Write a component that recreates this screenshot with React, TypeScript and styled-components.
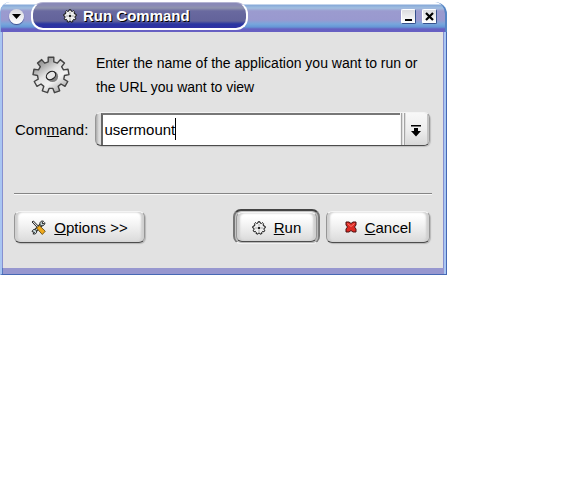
import React, { useState } from "react";
import styled, { createGlobalStyle, css } from "styled-components";

const GlobalStyle = createGlobalStyle`
  body {
    margin: 0;
    background: #fff;
    font-family: "Liberation Sans", Arial, sans-serif;
    font-size: 15px;
    color: #000;
  }
  *, *::before, *::after { box-sizing: border-box; }
  button, input { font: inherit; color: inherit; }
`;

const Dialog = styled.main`
  display: flex;
  flex-direction: column;
  width: 100%;
  max-width: 447px;
  padding-top: 2px;
`;

const TitleBar = styled.header`
  display: flex;
  align-items: flex-start;
  height: 30px;
  padding: 0 8px;
  background:
    linear-gradient(#fff 0 2px, #85a8d8 3px, #a2bfe0 6px, #9b9bcf 9px, #9999cf 18px, #78a6dc 22px, #6596d6 25px, #655fc0 27px, #6860c4);
  border-radius: 10px 12px 0 0;
  border-left: 1px solid #86aade;
  border-right: 2px solid #5484c4;
`;

const MenuButton = styled.button`
  display: grid;
  place-items: center;
  width: 15px;
  height: 15px;
  margin: 7px 7px 0 0;
  padding: 0;
  border: 0;
  border-radius: 50%;
  background: linear-gradient(#d8d8df, #fff);
  box-shadow: 0 1px 1px #3d4d8c;
`;

const TitleTab = styled.h1`
  display: flex;
  align-items: center;
  gap: 6px;
  width: 217px;
  height: 28px;
  margin: 0 auto 0 0;
  padding: 0 0 0 30px;
  border: 2px solid #fff;
  border-top: 1px solid #b3b3d2;
  border-radius: 12px;
  background: linear-gradient(#8989b6 0 2px, #8f93ad 5px, #69699f 8px, #63639a 18px, #2a35a0 21px, #3030a4);
  color: #fff;
  font-size: 15px;
  line-height: 20px;
  white-space: nowrap;
  text-shadow: 1px 1px 0 #000;
`;

const WindowControls = styled.div`
  display: flex;
  gap: 6px;
  margin-top: 7px;
`;

const ControlButton = styled.button`
  display: grid;
  place-items: center;
  width: 15px;
  height: 15px;
  padding: 0;
  border: 1px solid #fff;
  border-right-color: #36518d;
  border-bottom-color: #36518d;
  border-radius: 2px;
  background: linear-gradient(#dcdce0, #fff);
`;

const Frame = styled.div`
  border-left: 2px solid #a9c6f2;
  border-right: 1px solid #4668b4;
  border-bottom: 1px solid #4668b4;
  background: #a9c6f2;
  padding-right: 2px;
`;

const Body = styled.form`
  display: flex;
  flex-direction: column;
  padding: 19px 11px 24px;
  background: #e2e2e2;
  border: solid;
  border-width: 0 1px;
  border-color: #5478bf #8790d0;
`;

const BottomEdge = styled.div`
  height: 6px;
  background: #9797cf;
  border-left: 1px solid #5478bf;
`;

const Intro = styled.div`
  display: flex;
  gap: 26px;
  padding-left: 18px;
`;

const IntroIcon = styled.div`
  flex: none;
  width: 38px;
  height: 38px;
  margin-top: 5px;
`;

const IntroText = styled.p`
  margin: 0;
  max-width: 340px;
  font-size: 14px;
  line-height: 24px;
`;

const CommandRow = styled.div`
  display: flex;
  align-items: center;
  gap: 7px;
  margin: 13px 2px 47px 1px;

  label { padding-top: 1px; }
`;

const raised = css`
  border: 1px solid #969696;
  border-top-color: #f4f4f4;
  border-bottom-color: #4c4c4c;
  border-radius: 6px;
  background: linear-gradient(#fff, #fff 12%, #f0f0f0 50%, #dadada);
`;

const ComboBox = styled.div`
  ${raised}
  display: flex;
  flex: 1;
  min-width: 0;
  height: 34px;
  padding-left: 5px;
  background: linear-gradient(90deg, #aaa, #ddd 3px, #ccc);
  box-shadow: 1px 1px 1px #c0c0c0;
  overflow: hidden;
`;

const Field = styled.div`
  display: flex;
  align-items: center;
  flex: 1;
  min-width: 0;
  padding: 0 0 2px 1px;
  border-top: 2px solid #777;
  border-left: 2px solid #666;
  background: #fff;
`;

const CommandInput = styled.input`
  field-sizing: content;
  min-width: 1px;
  max-width: 100%;
  padding: 0;
  border: 0;
  outline: 0;
  background: transparent;
  caret-color: transparent;
`;

const Caret = styled.span`
  flex: none;
  width: 1px;
  height: 22px;
  background: #000;
`;

const DropButton = styled.button`
  display: grid;
  place-items: center;
  width: 29px;
  padding: 3px 0 0 5px;
  border: 0;
  border-right: 2px solid #c4c4c4;
  background:
    repeating-linear-gradient(90deg, #f4f4f4 0 1px, #a5a5a5 1px 2px, #ddd 2px 3px) 0 0 / 6px 100% no-repeat,
    linear-gradient(#f8f8f8, #eee 50%, #d8d8d8);
`;

const Separator = styled.hr`
  width: 100%;
  height: 2px;
  margin: 0;
  border: 0;
  border-top: 1px solid #858585;
  border-bottom: 1px solid #f8f8f8;
`;

const Actions = styled.div`
  display: flex;
  align-items: center;
  gap: 6px;
  margin: 14px 2px 0 0;
`;

const PushButton = styled.button<{ $wide?: boolean }>`
  ${raised}
  display: flex;
  align-items: center;
  justify-content: center;
  gap: 8px;
  width: ${(p) => (p.$wide ? 131 : 104)}px;
  height: 32px;
  padding: 1px 0 0;
  box-shadow: inset 3px 0 2px #d0d0d0, inset -3px 0 2px #d0d0d0, inset 0 2px 0 #fff, 1px 1px 1px #b8b8b8;
`;

const DefaultRing = styled.div`
  margin-left: auto;
  padding: 1px;
  border: solid;
  border-width: 2px 2px 1px;
  border-color: #444 #777 #f8f8f8;
  border-radius: 8px;
  background: #c4c4c4;

  ${PushButton} {
    width: 81px;
    height: 30px;
  }
`;

function gearPath(c: number, outer: number, inner: number, teeth: number) {
  const points: string[] = [];
  const step = (Math.PI * 2) / teeth;
  const at = (r: number, a: number) => `${(c + r * Math.sin(a)).toFixed(1)} ${(c - r * Math.cos(a)).toFixed(1)}`;
  for (let i = 0; i < teeth; i++) {
    const a = i * step;
    points.push(
      at(inner, a - step * 0.3),
      at(outer, a - step * 0.22),
      at(outer, a + step * 0.22),
      at(inner, a + step * 0.3)
    );
  }
  return `M${points.join("L")}Z`;
}

const LargeGear = () => (
  <svg width="38" height="38" viewBox="0 0 38 38" aria-hidden="true">
    <defs>
      <linearGradient id="metal" x1="0.8" y1="0.95" x2="0.2" y2="0.1">
        <stop offset="0" stopColor="#a8a8a8" />
        <stop offset="0.35" stopColor="#f2f2f2" />
        <stop offset="0.6" stopColor="#e2e2e2" />
        <stop offset="1" stopColor="#8c8c8c" />
      </linearGradient>
    </defs>
    <path d={gearPath(19, 18, 13.5, 9)} fill="url(#metal)" stroke="#444" strokeWidth="1.4" strokeLinejoin="round" />
    <circle cx="20.5" cy="20.5" r="5.6" fill="#808080" />
    <ellipse cx="19" cy="19.5" rx="5" ry="3.8" transform="rotate(-35 19 19.5)" fill="#e6e6e6" stroke="#222" strokeWidth="1.2" />
  </svg>
);

const SmallGear = () => (
  <svg width="14" height="14" viewBox="0 0 14 14" aria-hidden="true">
    <path d={gearPath(7, 6.3, 5.1, 9)} fill="#f0f0f0" stroke="#111" strokeWidth="1" />
    <path d="M7 3v2M7 9v2M3 7h2M9 7h2" stroke="#aaa" />
    <circle cx="7" cy="7" r="1.3" fill="#222" />
  </svg>
);

const ToolsIcon = () => (
  <svg width="15" height="15" viewBox="0 0 15 15" aria-hidden="true">
    <path d="M3 12l8-8" stroke="#222" strokeWidth="3.5" />
    <path d="M3 12l8-8" stroke="#b5ccd0" strokeWidth="1.7" />
    <path d="M12.5 1.2C9.5.4 8.2 3 9.3 5.2c2 1.4 4.7.2 4.6-2.5l-2 1.3-1-1zM1 11.5c1-3 4-2.3 4.6-.4.4 2-1.4 3.6-3.7 2.7l1.6-1.2z" fill="#c8dadd" stroke="#222" />
    <path d="M1 2l1.4-1 5.2 5.3-1.3 1.2z" fill="#ddd" stroke="#222" />
    <path d="M5.5 8l2.800-2.500 6 5.700-3 3.300z" fill="#efa91c" stroke="#57400d" strokeWidth="0.8" />
  </svg>
);

const CancelIcon = () => (
  <svg width="12" height="12" viewBox="0 0 12 12" aria-hidden="true">
    <path d="M1 1h3l2 1.5L8 1h3v3L9.5 6l1.5 2v3H8L6 9.5 4 11H1V8l1.5-2L1 4z" fill="#dd2923" stroke="#4c1111" strokeLinejoin="round" />
    <path d="M2.5 2.5l3.5 3 3.5-3" fill="none" stroke="#ff7a70" />
  </svg>
);

export default function App() {
  const [command, setCommand] = useState("usermount");

  return (
    <>
      <GlobalStyle />
      <Dialog>
        <TitleBar>
          <MenuButton type="button" aria-label="Window menu">
            <svg width="9" height="5" viewBox="0 0 9 5"><path d="M0 0h9L4.5 5z" /></svg>
          </MenuButton>
          <TitleTab>
            <SmallGear />
            Run Command
          </TitleTab>
          <WindowControls>
            <ControlButton type="button" aria-label="Minimize">
              <svg width="9" height="9" viewBox="0 0 9 9"><path d="M1 8h7" stroke="#000" strokeWidth="2" /></svg>
            </ControlButton>
            <ControlButton type="button" aria-label="Close">
              <svg width="9" height="9" viewBox="0 0 9 9"><path d="M1 1l7 7M8 1l-7 7" stroke="#000" strokeWidth="2.2" /></svg>
            </ControlButton>
          </WindowControls>
        </TitleBar>
        <Frame>
          <Body onSubmit={(e) => e.preventDefault()}>
            <Intro>
              <IntroIcon><LargeGear /></IntroIcon>
              <IntroText>
                Enter the name of the application you want to run or the URL you want to view
              </IntroText>
            </Intro>
            <CommandRow>
              <label htmlFor="command">Com<u>m</u>and:</label>
              <ComboBox>
                <Field>
                  <CommandInput
                    id="command"
                    type="text"
                    value={command}
                    onChange={(e) => setCommand(e.target.value)}
                    spellCheck={false}
                  />
                  <Caret />
                </Field>
                <DropButton type="button" aria-label="Show history">
                  <svg width="10" height="12" viewBox="0 0 10 12"><path d="M0 0h10v1.5H0zM3 3h4v3h3L5 11.5 0 6h3z" /></svg>
                </DropButton>
              </ComboBox>
            </CommandRow>
            <Separator />
            <Actions>
              <PushButton type="button" $wide>
                <ToolsIcon />
                <span><u>O</u>ptions &gt;&gt;</span>
              </PushButton>
              <DefaultRing>
                <PushButton type="submit">
                  <SmallGear />
                  <span><u>R</u>un</span>
                </PushButton>
              </DefaultRing>
              <PushButton type="button">
                <CancelIcon />
                <span><u>C</u>ancel</span>
              </PushButton>
            </Actions>
          </Body>
          <BottomEdge />
        </Frame>
      </Dialog>
    </>
  );
}
